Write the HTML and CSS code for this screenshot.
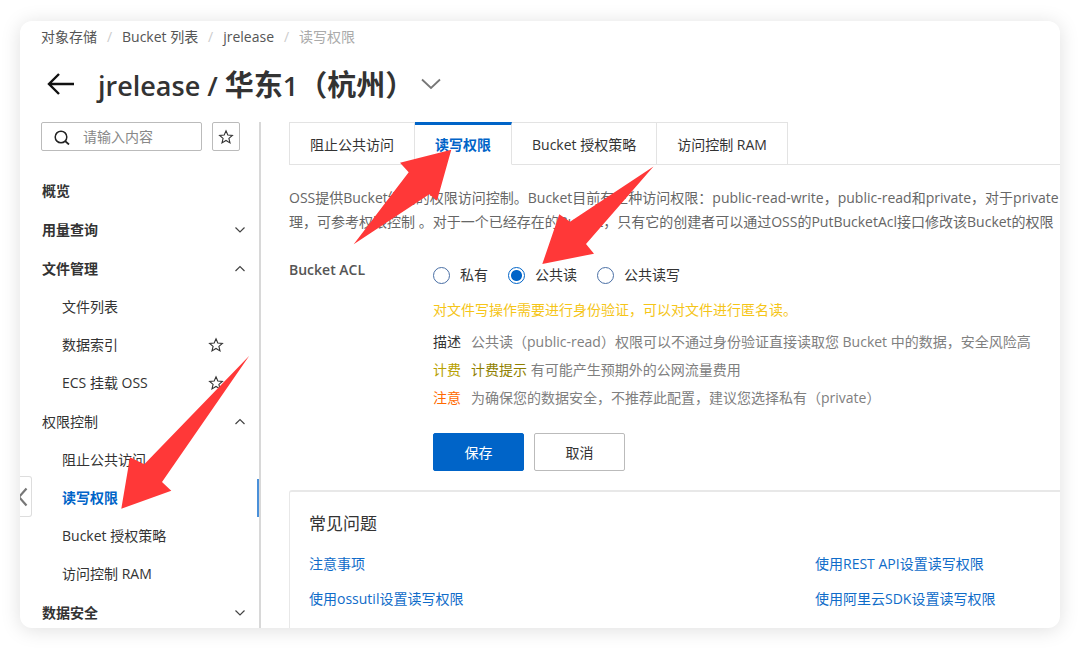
FILE: index.html
```html
<!DOCTYPE html>
<html lang="zh-CN">
<head>
    <meta charset="UTF-8">
    <meta name="viewport" content="width=device-width, initial-scale=1.0">
    <title>对象存储 - 读写权限</title>
    <link rel="stylesheet" href="styles.css">
</head>
<body>
    <!-- shared icons -->
    <svg class="icon-defs" width="0" height="0">
        <symbol id="star" viewBox="0 0 16 16">
            <path d="M8 1.8l1.8 4.2 4.6.4-3.5 3 1.1 4.5-4-2.400-4 2.400 1.100-4.500-3.500-3 4.600-.4z" fill="none" stroke="#333" stroke-width="1.1"/>
        </symbol>
        <symbol id="down" viewBox="0 0 12 12">
            <path d="M1.5 3.5L6 8l4.5-4.5" fill="none" stroke="#444" stroke-width="1.2"/>
        </symbol>
        <symbol id="up" viewBox="0 0 12 12">
            <path d="M1.5 8L6 3.5 10.5 8" fill="none" stroke="#444" stroke-width="1.2"/>
        </symbol>
    </svg>

    <div class="card">
        <nav class="breadcrumb">
            <a href="#">对象存储</a><span class="sep">/</span>
            <a href="#">Bucket 列表</a><span class="sep">/</span>
            <a href="#">jrelease</a><span class="sep">/</span>
            <span class="current">读写权限</span>
        </nav>

        <header class="title">
            <button type="button" class="back" aria-label="返回">
                <svg width="28" height="24" viewBox="0 0 28 24"><path d="M27 12H2M12 2L2 12l10 10" fill="none" stroke="#111" stroke-width="2.4"/></svg>
            </button>
            <h1>jrelease / <b>华东</b>1<b>（杭州）</b></h1>
            <button type="button" class="switch" aria-label="切换">
                <svg width="20" height="12" viewBox="0 0 20 12"><path d="M1 1.5l9 8.5 9-8.5" fill="none" stroke="#777" stroke-width="1.8"/></svg>
            </button>
        </header>

        <div class="layout">
            <aside class="sidebar">
                <div class="search-row">
                    <div class="search">
                        <svg width="16" height="16" viewBox="0 0 16 16"><circle cx="7" cy="8" r="5.8" fill="none" stroke="#222" stroke-width="1.5"/><path d="M11 12l4 3.500" stroke="#222" stroke-width="1.7"/></svg>
                        <input type="text" placeholder="请输入内容" aria-label="搜索">
                    </div>
                    <button type="button" class="fav" aria-label="收藏"><svg width="16" height="16"><use href="#star"/></svg></button>
                </div>

                <nav class="menu">
                    <div class="group">
                        <a href="#" class="head">概览</a>
                    </div>
                    <div class="group">
                        <a href="#" class="head">用量查询<svg width="12" height="12"><use href="#down"/></svg></a>
                    </div>
                    <div class="group">
                        <a href="#" class="head">文件管理<svg width="12" height="12"><use href="#up"/></svg></a>
                        <a href="#" class="item">文件列表</a>
                        <a href="#" class="item">数据索引<svg width="16" height="16"><use href="#star"/></svg></a>
                        <a href="#" class="item">ECS 挂载 OSS<svg width="16" height="16"><use href="#star"/></svg></a>
                    </div>
                    <div class="group">
                        <a href="#" class="head plain">权限控制<svg width="12" height="12"><use href="#up"/></svg></a>
                        <a href="#" class="item">阻止公共访问</a>
                        <a href="#" class="item active">读写权限</a>
                        <a href="#" class="item">Bucket 授权策略</a>
                        <a href="#" class="item">访问控制 RAM</a>
                    </div>
                    <div class="group">
                        <a href="#" class="head">数据安全<svg width="12" height="12"><use href="#down"/></svg></a>
                    </div>
                </nav>
            </aside>

            <main class="content">
                <div class="tabs">
                    <button type="button" class="tab">阻止公共访问</button>
                    <button type="button" class="tab selected">读写权限</button>
                    <button type="button" class="tab">Bucket 授权策略</button>
                    <button type="button" class="tab">访问控制 RAM</button>
                </div>

                <p class="intro">
                    OSS提供Bucket级别的权限访问控制。Bucket目前有三种访问权限：public-read-write，public-read和private，对于private<br>
                    理，可参考权限控制 。对于一个已经存在的Bucket，只有它的创建者可以通过OSS的PutBucketAcl接口修改该Bucket的权限
                </p>

                <form class="acl">
                    <div class="acl-label">Bucket ACL</div>
                    <div class="acl-body">
                        <div class="radios">
                            <label><input type="radio" name="acl" value="private">私有</label>
                            <label><input type="radio" name="acl" value="public-read" checked>公共读</label>
                            <label><input type="radio" name="acl" value="public-read-write">公共读写</label>
                        </div>
                        <p class="warning">对文件写操作需要进行身份验证，可以对文件进行匿名读。</p>
                        <dl class="notes">
                            <dt>描述</dt>
                            <dd>公共读（public-read）权限可以不通过身份验证直接读取您 Bucket 中的数据，安全风险高</dd>
                            <dt class="fee">计费</dt>
                            <dd><a href="#">计费提示</a> 有可能产生预期外的公网流量费用</dd>
                            <dt class="notice">注意</dt>
                            <dd>为确保您的数据安全，不推荐此配置，建议您选择私有（private）</dd>
                        </dl>
                        <div class="actions">
                            <button type="button" class="btn primary">保存</button>
                            <button type="button" class="btn">取消</button>
                        </div>
                    </div>
                </form>

                <section class="faq">
                    <h2>常见问题</h2>
                    <div class="faq-links">
                        <a href="#">注意事项</a>
                        <a href="#">使用REST API设置读写权限</a>
                        <a href="#">使用ossutil设置读写权限</a>
                        <a href="#">使用阿里云SDK设置读写权限</a>
                    </div>
                </section>
            </main>
        </div>

        <button type="button" class="collapse" aria-label="收起">
            <svg width="8" height="20" viewBox="0 0 8 20"><path d="M6.5 1.500L-1 10l7.500 8.500" fill="none" stroke="#777" stroke-width="2.2"/></svg>
        </button>

        <!-- pointer arrows over the page -->
        <svg class="arrows" width="1040" height="607" viewBox="20 21 1040 607">
            <path d="M451.300 149.700L400 162.700l8.700 9.600-55 72 75.600-50 7.700 6.400z"/>
            <path d="M653.500 166.500L570 221.700l-10.700-7.400-17 49.700 51.700-10.300-8-9.700z"/>
            <path d="M249.300 355.700l-105 108.600-14.300-7-8.700 51.400 50-18-9.300-8.700z"/>
        </svg>
    </div>
</body>
</html>
```

FILE: styles.css
```css
* {
    box-sizing: border-box;
}
body {
    margin: 0;
    padding: 21px 20px 20px;
    background: #fff;
    color: #333;
    font-family: "Open Sans", "Noto Sans CJK SC", sans-serif;
    font-size: 14px;
    line-height: 24px;
}
a {
    color: inherit;
    text-decoration: none;
}
button {
    font: inherit;
    color: inherit;
    background: none;
    border: none;
    padding: 0;
    cursor: pointer;
}
svg {
    display: block;
    flex: none;
}
.icon-defs {
    position: absolute;
}
.card {
    position: relative;
    display: flex;
    flex-direction: column;
    height: calc(100vh - 41px);
    overflow: hidden;
    border-radius: 12px;
    background: #fff;
    box-shadow: 0 2px 20px rgba(0, 0, 0, 0.13);
}
.breadcrumb {
    display: flex;
    padding: 4px 21px 0;
    color: #555;
}
.breadcrumb .sep {
    width: 25px;
    text-align: center;
    color: #ccc;
}
.breadcrumb .current {
    color: #aaa;
}
.title {
    display: flex;
    align-items: center;
    flex: none;
    height: 73px;
    padding: 0 27px;
}
.title button {
    padding-bottom: 4px;
}
.title h1 {
    margin: 0 7px 0 23px;
    font-size: 27px;
    font-weight: 600;
    line-height: 40px;
}
.title b {
    font-size: 29px;
    font-weight: 700;
}
.layout {
    display: flex;
    flex: 1;
    min-height: 0;
}
.sidebar {
    flex: none;
    width: 241px;
    border-right: 2px solid #d8d8d8;
}
.search-row {
    display: flex;
    gap: 10px;
    padding-left: 21px;
    margin-bottom: 21px;
}
.search {
    display: flex;
    align-items: center;
    gap: 13px;
    width: 161px;
    height: 29px;
    padding-left: 12px;
    border: 1px solid #bbb;
    border-radius: 2px;
}
.search input {
    width: 110px;
    border: none;
    outline: none;
    padding: 0;
    font: inherit;
    background: none;
}
.search input::placeholder {
    color: #888;
}
.fav {
    display: flex;
    align-items: center;
    justify-content: center;
    width: 28px;
    height: 29px;
    border: 1px solid #bbb;
    border-radius: 2px;
}
.menu {
    display: flex;
    flex-direction: column;
    gap: 1px;
}
.head,
.item {
    display: flex;
    align-items: center;
    justify-content: space-between;
    height: 38px;
}
.head {
    padding: 0 13px 0 22px;
    font-weight: 700;
}
.head.plain {
    font-weight: 400;
}
.item {
    padding: 0 35px 0 42px;
}
.item.active {
    color: #0064c8;
    font-weight: 700;
    border-right: 2px solid #4a90d9;
}
.content {
    display: flex;
    flex-direction: column;
    flex: 1;
    min-width: 0;
    padding-left: 28px;
}
.tabs {
    display: flex;
    flex: none;
    height: 43px;
    border-bottom: 1px solid #e3e3e3;
}
.tab {
    height: 43px;
    padding: 2px 20px 0;
    border: 1px solid #e3e3e3;
    border-left: none;
}
.tab:first-child {
    border-left: 1px solid #e3e3e3;
}
.tab.selected {
    padding-top: 0;
    color: #0064c8;
    font-weight: 700;
    border-top: 3px solid #0064c8;
    border-bottom-color: #fff;
}
.intro {
    margin: 21px 0 0;
    color: #666;
    white-space: nowrap;
}
.acl {
    display: flex;
    padding-top: 24px;
}
.acl-label {
    flex: none;
    width: 144px;
    font-weight: 600;
    color: #555;
}
.acl-body {
    flex: 1;
    white-space: nowrap;
}
.radios {
    display: flex;
    gap: 20px;
    padding-top: 5px;
}
.radios label {
    display: flex;
    align-items: center;
    gap: 10px;
}
.radios input {
    appearance: none;
    width: 17px;
    height: 17px;
    margin: 0;
    border: 1px solid #4a6fa5;
    border-radius: 50%;
}
.radios input:checked {
    border-color: #0064c8;
    background: radial-gradient(circle, #0064c8 5px, #fff 6px);
}
.warning {
    margin: 11px 0 6px;
    color: #f5c518;
}
.notes {
    display: grid;
    grid-template-columns: 38px 1fr;
    margin: 0;
    line-height: 28px;
}
.notes dd {
    margin: 0;
    color: #808080;
}
.notes .fee {
    color: #b8a100;
}
.notes dd a {
    color: #8f7f00;
}
.notes .notice {
    color: #ff6a00;
}
.actions {
    display: flex;
    gap: 10px;
    margin-top: 21px;
}
.btn {
    width: 91px;
    height: 38px;
    padding-top: 1px;
    border: 1px solid #bbb;
    border-radius: 2px;
}
.btn.primary {
    color: #fff;
    background: #0064c8;
    border-color: #0064c8;
}
.faq {
    flex: 1;
    margin-top: 19px;
    padding: 20px 19px 0;
    border: solid #e8e8e8;
    border-width: 2px 0 0 1px;
    border-radius: 3px 0 0 0;
}
.faq h2 {
    margin: 0;
    font-size: 17px;
    font-weight: 400;
}
.faq-links {
    display: grid;
    grid-template-columns: 506px 1fr;
    row-gap: 11px;
    margin-top: 16px;
    color: #0f6cc9;
}
.collapse {
    position: absolute;
    left: 0;
    top: 455px;
    width: 12px;
    height: 41px;
    border: 1px solid #ddd;
    border-left: none;
    border-radius: 0 3px 3px 0;
    background: #fff;
}
.arrows {
    position: absolute;
    left: 0;
    top: 0;
    fill: #ff3838;
    pointer-events: none;
}
```
